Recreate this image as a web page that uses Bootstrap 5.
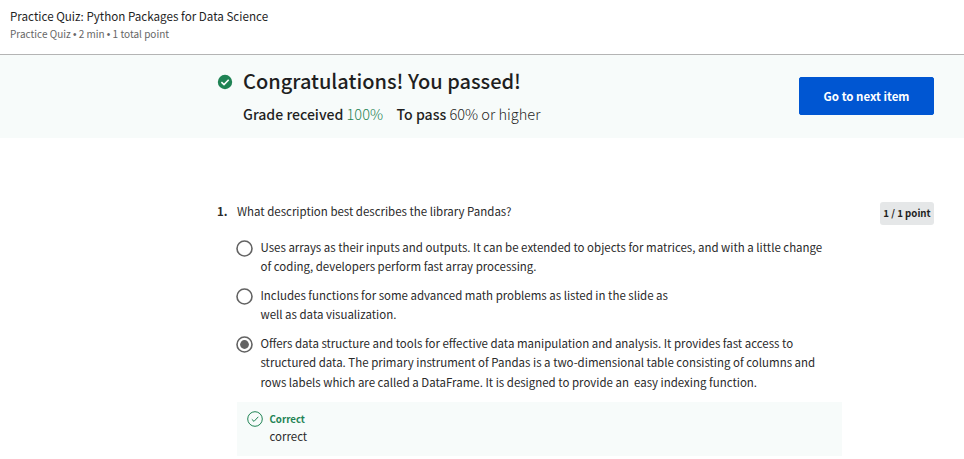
<!DOCTYPE html>
<html lang="en">
<head>
<meta charset="utf-8">
<meta name="viewport" content="width=device-width, initial-scale=1">
<title>Practice Quiz</title>
<link href="https://cdn.jsdelivr.net/npm/bootstrap@5.3.0/dist/css/bootstrap.min.css" rel="stylesheet">
<style>
body{font-family:"Noto Sans CJK SC","Noto Sans",sans-serif;font-size:11.48px;line-height:19.6px;color:#2a2a2a;height:459px;overflow:hidden}
.quiz-head{height:55px;padding:7px 10px 0;border-bottom:1px solid #b4b4b4}
.quiz-title{font-size:11.63px;line-height:19px;color:#1f1f1f}
.quiz-meta{font-size:10px;line-height:15px;color:#666}
.dot{font-family:"Liberation Sans",sans-serif;font-size:10px}
.result{height:83px;background:#f7fbfa;padding:13px 30px 0 217px;color:#1f1f1f}
.result h1{font-size:20px;line-height:26px;font-weight:500}
.result-icon{margin-top:6px;margin-right:10px}
.grade{font-size:14.1px;line-height:20px;margin-top:10px;gap:13.5px;font-weight:500}
.green{color:#1f8354}
.light{font-weight:300;font-size:14.6px}
.next-btn{--bs-btn-bg:#0056d2;--bs-btn-border-color:#0056d2;width:135px;height:38px;margin-top:9px;border-radius:2px;font-size:11.5px;line-height:20px}
.question{padding:64px 30px 0 217px}
.num{width:20px;font-size:11.5px}
.points{background:#e5e7e8;color:#1f1f1f;width:54px;height:23px;font-size:9.7px;line-height:22px;border-radius:3px}
.option{margin-bottom:8.8px}
.option svg{margin-top:2.4px;margin-right:7.5px}
.options{margin-top:12.6px;margin-left:19px}
.feedback{background:#f7fbfa;width:605px;height:54px;margin-left:20px;margin-top:10px;padding:8px 10px 0}
.feedback svg{margin-top:1px;margin-right:6.5px}
.feedback strong{font-size:9.7px;line-height:18px}
.feedback-text{line-height:17px}
</style>
</head>
<body class="bg-white">
<header class="quiz-head">
  <div class="quiz-title text-nowrap">Practice Quiz: Python Packages for Data Science</div>
  <div class="quiz-meta text-nowrap">Practice Quiz <span class="dot">•</span> 2 min <span class="dot">•</span> 1 total point</div>
</header>
<section class="result d-flex justify-content-between align-items-start">
  <div class="d-flex align-items-start">
    <svg class="result-icon flex-shrink-0" width="16" height="16" viewBox="0 0 16 16"><circle cx="8" cy="8" r="7.2" fill="#1f8354"/><path d="M4.4 8.2 7 10.6 11.7 5.7" fill="none" stroke="#fff" stroke-width="1.6"/></svg>
    <div class="text-nowrap">
      <h1 class="mb-0">Congratulations! You passed!</h1>
      <div class="grade d-flex"><div>Grade received <span class="green light">100%</span></div><div>To pass <span class="light">60% or higher</span></div></div>
    </div>
  </div>
  <button class="btn btn-primary next-btn p-0 fw-bold" type="button">Go to next item</button>
</section>
<main class="question">
  <div class="d-flex align-items-start">
    <div class="num fw-bold">1.</div>
    <div class="prompt flex-grow-1">What description best describes the library Pandas?</div>
    <div class="points fw-bold text-center text-nowrap">1 / 1 point</div>
  </div>
  <div class="options text-nowrap">
    <div class="option d-flex align-items-start">
      <svg class="flex-shrink-0" width="17" height="17" viewBox="0 0 17 17"><circle cx="8.5" cy="8.5" r="7.5" fill="none" stroke="#636363" stroke-width="1.6"/></svg>
      <div>Uses arrays as their inputs and outputs. It can be extended to objects for matrices, and with a little change<br>of coding, developers perform fast array processing.</div>
    </div>
    <div class="option d-flex align-items-start">
      <svg class="flex-shrink-0" width="17" height="17" viewBox="0 0 17 17"><circle cx="8.5" cy="8.5" r="7.5" fill="none" stroke="#636363" stroke-width="1.6"/></svg>
      <div>Includes functions for some advanced math problems as listed in the slide as<br>well as data visualization.</div>
    </div>
    <div class="option d-flex align-items-start">
      <svg class="flex-shrink-0" width="17" height="17" viewBox="0 0 17 17"><circle cx="8.5" cy="8.5" r="7.5" fill="none" stroke="#636363" stroke-width="1.6"/><circle cx="8.5" cy="8.5" r="4.4" fill="#636363"/></svg>
      <div>Offers data structure and tools for effective data manipulation and analysis. It provides fast access to<br>structured data. The primary instrument of Pandas is a two-dimensional table consisting of columns and<br>rows labels which are called a DataFrame. It is designed to provide an&nbsp; easy indexing function.</div>
    </div>
  </div>
  <div class="feedback d-flex align-items-start">
    <svg class="flex-shrink-0" width="16" height="16" viewBox="0 0 16 16"><circle cx="8" cy="8" r="7.3" fill="none" stroke="#1f8354"/><path d="M4.8 8.3 7 10.4 11.3 5.8" fill="none" stroke="#1f8354"/></svg>
    <div><strong class="d-block green">Correct</strong><div class="feedback-text">correct</div></div>
  </div>
</main>
<script src="https://cdn.jsdelivr.net/npm/bootstrap@5.3.0/dist/js/bootstrap.bundle.min.js"></script>
</body>
</html>
